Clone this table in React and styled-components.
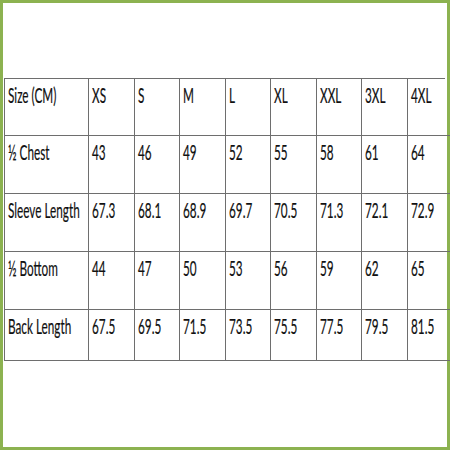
import styled, { createGlobalStyle } from "styled-components";

const GlobalStyle = createGlobalStyle`
  html, body {
    margin: 0;
    padding: 0;
    background: #ffffff;
  }
`;

const sizes = ["XS", "S", "M", "L", "XL", "XXL", "3XL", "4XL"];

const rows = [
  { label: "½ Chest", values: ["43", "46", "49", "52", "55", "58", "61", "64"] },
  { label: "Sleeve Length", values: ["67.3", "68.1", "68.9", "69.7", "70.5", "71.3", "72.1", "72.9"] },
  { label: "½ Bottom", values: ["44", "47", "50", "53", "56", "59", "62", "65"] },
  { label: "Back Length", values: ["67.5", "69.5", "71.5", "73.5", "75.5", "77.5", "79.5", "81.5"] },
];

export default function App() {
  return (
    <>
      <GlobalStyle />
      <Frame>
        <Chart>
          <Cell $h={57}><Label>Size (CM)</Label></Cell>
          {sizes.map((s) => (
            <Cell key={s} $h={57}><Label>{s}</Label></Cell>
          ))}
          {rows.map((row, i) => {
            const h = i === rows.length - 1 ? 51 : 58;
            return [
              <Cell key={row.label} $h={h}><Label>{row.label}</Label></Cell>,
              ...row.values.map((v, j) => (
                <Cell key={row.label + j} $h={h}><Label>{v}</Label></Cell>
              )),
            ];
          })}
        </Chart>
      </Frame>
    </>
  );
}

const Frame = styled.div`
  width: 450px;
  height: 450px;
  box-sizing: border-box;
  border: 3px solid #8cb250;
  background: #ffffff;
  padding: 75px 2px 0 1px;
`;

const Chart = styled.div`
  display: grid;
  grid-template-columns: 84px repeat(8, 1fr);
  border-top: 1px solid #6e6e6e;
  border-left: 1px solid #6e6e6e;
`;

const Cell = styled.div`
  height: ${(p) => p.$h}px;
  box-sizing: border-box;
  border-right: 1px solid #6e6e6e;
  border-bottom: 1px solid #6e6e6e;
  padding: 3px 0 0 3px;
  overflow: visible;
  white-space: nowrap;
`;

const Label = styled.span`
  display: inline-block;
  font-family: Lato, "Open Sans", sans-serif;
  font-size: 21px;
  line-height: 25px;
  color: #111111;
  -webkit-text-stroke: 0.2px #111111;
  transform: scaleX(0.56);
  transform-origin: left top;
`;
